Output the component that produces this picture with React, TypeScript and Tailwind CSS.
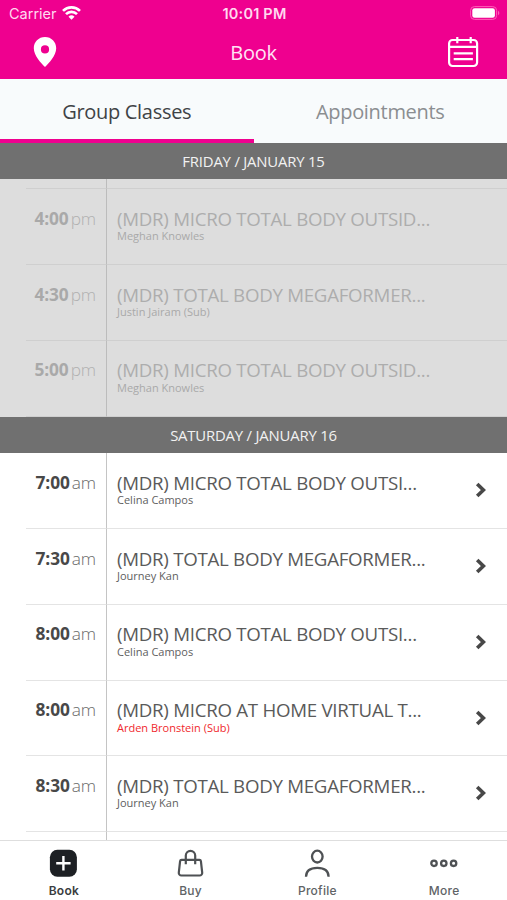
import React, { useState } from 'react';

interface ClassItem {
  time: string;
  period: 'am' | 'pm';
  title: string;
  teacher: string;
  sub?: boolean;
}

const friday: ClassItem[] = [
  { time: '4:00', period: 'pm', title: '(MDR) MICRO TOTAL BODY OUTSID...', teacher: 'Meghan Knowles' },
  { time: '4:30', period: 'pm', title: '(MDR) TOTAL BODY MEGAFORMER...', teacher: 'Justin Jairam (Sub)' },
  { time: '5:00', period: 'pm', title: '(MDR) MICRO TOTAL BODY OUTSID...', teacher: 'Meghan Knowles' },
];

const saturday: ClassItem[] = [
  { time: '7:00', period: 'am', title: '(MDR) MICRO TOTAL BODY OUTSI...', teacher: 'Celina Campos' },
  { time: '7:30', period: 'am', title: '(MDR) TOTAL BODY MEGAFORMER...', teacher: 'Journey Kan' },
  { time: '8:00', period: 'am', title: '(MDR) MICRO TOTAL BODY OUTSI...', teacher: 'Celina Campos' },
  { time: '8:00', period: 'am', title: '(MDR) MICRO AT HOME VIRTUAL T...', teacher: 'Arden Bronstein (Sub)', sub: true },
  { time: '8:30', period: 'am', title: '(MDR) TOTAL BODY MEGAFORMER...', teacher: 'Journey Kan' },
];

const DayHeader: React.FC<{ label: string }> = ({ label }) => (
  <div className="flex h-[36.5px] shrink-0 items-center justify-center bg-[#707070] text-[14.9px] tracking-[-0.2px] text-[#f2f2f2]">
    {label}
  </div>
);

const ClassRow: React.FC<{ item: ClassItem; past?: boolean }> = ({ item, past }) => (
  <div className="flex h-[75.75px] shrink-0">
    <div className="w-[26px] shrink-0" />
    <div className={`flex w-[81px] shrink-0 items-start justify-end border-r border-b pr-[10px] pt-[17.5px] text-[17.3px] leading-6 tracking-[-0.1px] ${past ? 'border-r-[#bcbcbc] border-b-[#cfcfcf] text-[#a9a9a9]' : 'border-r-[#c4c4c4] border-b-[#e4e4e4] text-[#484848]'}`}>
      <span className="font-bold">{item.time}</span>
      <span className={`ml-[2px] font-light ${past ? 'text-[#b0b0b0]' : 'text-[#6a6a6a]'}`}>{item.period}</span>
    </div>
    <div className={`flex flex-1 border-b pl-[10px] ${past ? 'border-[#cfcfcf]' : 'border-[#e4e4e4]'}`}>
      <div className="flex-1 pt-[17.5px] whitespace-nowrap">
        <div className={`text-[18.7px] leading-6 tracking-[-0.27px] ${past ? 'text-[#adadad]' : 'text-[#5a5a5a]'}`}>{item.title}</div>
        <div className={`-mt-[2.5px] text-[11px] leading-[15px] ${past ? 'text-[#a9a9a9]' : item.sub ? 'text-[#f0282d]' : 'text-[#606060]'}`}>
          {item.teacher}
        </div>
      </div>
      {!past && (
        <svg className="mt-[29px] mr-[20px] h-4 w-3" viewBox="0 0 12 16" fill="none" stroke="#484848" strokeWidth="3.6">
          <path d="M2.200 2 8.400 8 2.200 14" />
        </svg>
      )}
    </div>
  </div>
);

const BookIcon = () => (
  <svg width="28" height="28" viewBox="0 0 28 28" fill="none">
    <rect x=".9" y=".7" width="27" height="27" rx="7.5" fill="#1d2024" />
    <path d="M14.400 7v14.400M7.200 14.200h14.400" stroke="#fff" strokeWidth="2.400" />
  </svg>
);

const BuyIcon = () => (
  <svg width="28" height="28" viewBox="0 0 28 28" fill="none" stroke="#4e5154" strokeWidth="2.200">
    <path d="M5.600 10.800h17.800a1.500 1.500 0 0 1 1.500 1.300l1.300 11.500a2.600 2.600 0 0 1-2.600 2.900H5.400a2.600 2.600 0 0 1-2.600-2.900l1.300-11.500a1.500 1.500 0 0 1 1.500-1.300Z" />
    <path d="M9.800 15.300V6.600a4.700 4.700 0 0 1 9.400 0v8.700" />
  </svg>
);

const ProfileIcon = () => (
  <svg width="28" height="28" viewBox="0 0 28 28" fill="none" stroke="#4e5154" strokeWidth="2.300">
    <ellipse cx="14.300" cy="7.600" rx="5.300" ry="5.900" />
    <path d="M3 27.800c0-6.300 4-8.900 11.300-8.900s11.300 2.600 11.300 8.900" />
  </svg>
);

const MoreIcon = () => (
  <svg width="28" height="28" viewBox="0 0 28 28" fill="none" stroke="#4e5154" strokeWidth="2.300">
    <circle cx="4" cy="14.300" r="2.700" />
    <circle cx="13.800" cy="14.300" r="2.700" />
    <circle cx="23.600" cy="14.300" r="2.700" />
  </svg>
);

const navItems = [
  { label: 'Book', Icon: BookIcon },
  { label: 'Buy', Icon: BuyIcon },
  { label: 'Profile', Icon: ProfileIcon },
  { label: 'More', Icon: MoreIcon },
];

const App: React.FC = () => {
  const [tab, setTab] = useState('Group Classes');
  const [page, setPage] = useState('Book');

  return (
    <div className="flex h-[900px] w-[507px] flex-col overflow-hidden bg-white font-['Open_Sans',sans-serif]">
      <header className="h-[79px] shrink-0 bg-[#ef008f] text-white">
        {/* Status bar */}
        <div className="grid h-[27px] grid-cols-3 items-center pl-[9px] pr-[7px] font-['Inter',sans-serif] text-[14.5px] text-[#ffd9f0]">
          <div className="flex items-center gap-[5px]">
            <span>Carrier</span>
            <svg className="-mt-px" width="19" height="14" viewBox="0 0 19 14" fill="none" stroke="#fff" strokeWidth="2.700">
              <path d="M1 4.900a12.200 12.200 0 0 1 17 0" />
              <path d="M4 8.100a7.900 7.900 0 0 1 11 0" />
              <path d="m9.500 13.800-3-3.100a4.300 4.300 0 0 1 6 0Z" fill="#fff" stroke="none" />
            </svg>
          </div>
          <span className="text-center text-[14.5px] font-semibold tracking-[0.2px]">10:01 PM</span>
          <svg className="-mt-px justify-self-end" width="30" height="14" viewBox="0 0 30 14" fill="none">
            <rect x=".6" y=".6" width="26" height="12.800" rx="3.800" stroke="#ff5cb8" strokeWidth="1" />
            <rect x="2.300" y="2.300" width="22.600" height="9.400" rx="2.300" fill="#fff" />
            <path d="M28 4.800c1.800.8 1.800 3.600 0 4.400Z" fill="#ff5cb8" />
          </svg>
        </div>
        <div className="flex h-[50px] items-center justify-between pl-[33px] pr-[28px]">
          <svg width="24" height="30" viewBox="0 0 24 30" fill="#fff">
            <path fillRule="evenodd" d="M12 0C5.600 0 .8 4.900.8 11.200.8 18.500 8.300 26.300 12 30c3.700-3.700 11.200-11.500 11.200-18.800C23.200 4.900 18.400 0 12 0Zm0 8.300a4.100 4.100 0 1 1 0 8.200 4.100 4.100 0 0 1 0-8.200Z" />
          </svg>
          <h1 className="pt-px pl-[3px] text-[20px] tracking-[-0.3px] text-[#ffe3f4]">Book</h1>
          <svg width="32" height="32" viewBox="0 0 32 32" fill="none" stroke="#fff" strokeWidth="2.200">
            <rect x="2.100" y="4" width="28" height="26" rx="3.500" />
            <path d="M2 10.800h28M10.300 1v6.300M23.700 1v6.300M6.700 17.300h19.200M6.700 23.200h19.200" />
          </svg>
        </div>
      </header>

      <div className="flex h-[63.5px] shrink-0 bg-[#f8fbfc]">
        {['Group Classes', 'Appointments'].map((name) => (
          <button
            key={name}
            onClick={() => setTab(name)}
            className={`flex-1 border-b-4 pt-[6px] text-[20px] tracking-[-0.3px] ${tab === name ? 'border-[#ef008f] text-[#3f4346]' : 'border-transparent text-[#8b8e91]'}`}
          >
            {name}
          </button>
        ))}
      </div>

      <main className="flex min-h-0 flex-1 flex-col overflow-hidden">
        <DayHeader label="FRIDAY / JANUARY 15" />
        <section className="flex h-[237.9px] shrink-0 flex-col overflow-hidden bg-[#dddddd]">
          {/* tail of the row scrolled under the header */}
          <div className="flex h-[10.4px] shrink-0">
            <div className="w-[26px]" />
            <div className="w-[81px] border-r border-b border-r-[#bcbcbc] border-b-[#cfcfcf]" />
            <div className="flex-1 border-b border-[#cfcfcf]" />
          </div>
          {friday.map((item) => <ClassRow key={item.time} item={item} past />)}
        </section>
        <DayHeader label="SATURDAY / JANUARY 16" />
        <section className="flex flex-col">
          {saturday.map((item, i) => <ClassRow key={i} item={item} />)}
          <div className="flex h-[10px] shrink-0">
            <div className="w-[107px] border-r border-[#c4c4c4]" />
            <div className="flex-1" />
          </div>
        </section>
      </main>

      <nav className="grid h-[60px] shrink-0 grid-cols-4 border-t border-[#dedede] bg-white font-['Inter',sans-serif]">
        {navItems.map(({ label, Icon }) => (
          <button
            key={label}
            onClick={() => setPage(label)}
            className={`flex flex-col items-center pt-[8px] text-[12px] tracking-[0.25px] ${page === label ? 'font-semibold text-[#3a3d40]' : 'font-medium text-[#606366]'}`}
          >
            <Icon />
            <span className="mt-[6px] pl-px leading-[16px]">{label}</span>
          </button>
        ))}
      </nav>
    </div>
  );
};

export default App;
